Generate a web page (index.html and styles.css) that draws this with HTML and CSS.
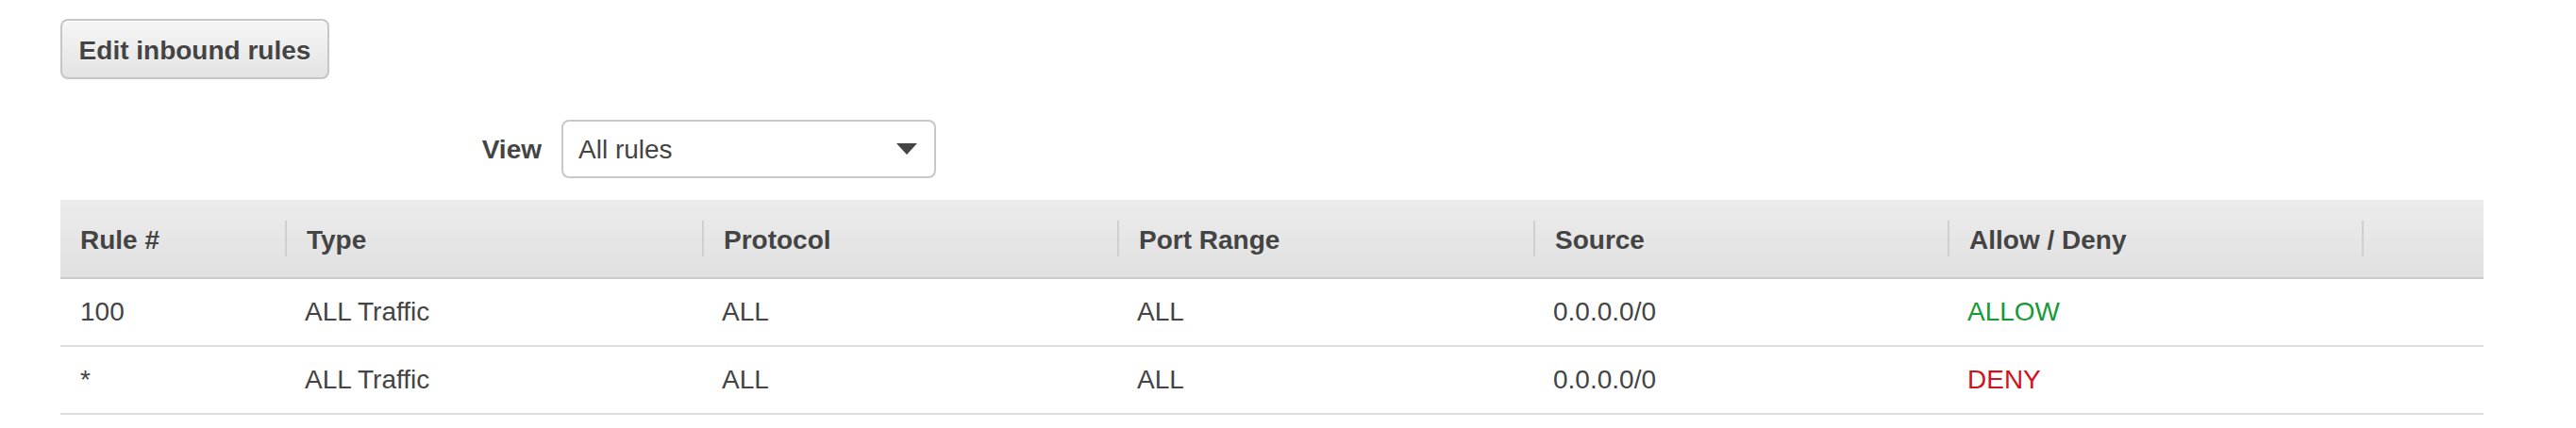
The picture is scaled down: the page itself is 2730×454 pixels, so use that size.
FILE: index.html
```html
<!DOCTYPE html>
<html>
<head>
<meta charset="utf-8">
<link rel="stylesheet" href="styles.css">
</head>
<body>
<div class="page">
  <div class="toolbar">
    <button class="btn">Edit inbound rules</button>
  </div>
  <div class="filter">
    <label class="filter-label">View</label>
    <div class="select">
      <span class="select-value">All rules</span>
      <svg class="select-arrow" width="22" height="12" viewBox="0 0 22 12"><polygon points="0,0 22,0 11,12" fill="#444"/></svg>
    </div>
  </div>
  <div class="grid">
    <div class="thead">
      <div class="th first"><span class="lab">Rule #</span></div>
      <div class="th"><span class="lab">Type</span></div>
      <div class="th"><span class="lab">Protocol</span></div>
      <div class="th"><span class="lab">Port Range</span></div>
      <div class="th"><span class="lab">Source</span></div>
      <div class="th"><span class="lab">Allow / Deny</span></div>
      <div class="th"><span class="lab"></span></div>
    </div>
    <div class="tr">
      <div class="td">100</div>
      <div class="td">ALL Traffic</div>
      <div class="td">ALL</div>
      <div class="td">ALL</div>
      <div class="td">0.0.0.0/0</div>
      <div class="td allow">ALLOW</div>
      <div class="td"></div>
    </div>
    <div class="tr">
      <div class="td">*</div>
      <div class="td">ALL Traffic</div>
      <div class="td">ALL</div>
      <div class="td">ALL</div>
      <div class="td">0.0.0.0/0</div>
      <div class="td deny">DENY</div>
      <div class="td"></div>
    </div>
  </div>
</div>
</body>
</html>
```
FILE: styles.css
```css
html, body {
  margin: 0;
  padding: 0;
  background: #fff;
}
body {
  font-family: "Liberation Sans", Arial, Helvetica, sans-serif;
  font-size: 28px;
  color: #444;
}
.page {
  padding: 20px 0 0 64px;
}
.toolbar {
  display: flex;
}
.btn {
  height: 64px;
  width: 285px;
  padding: 4px 0 0 0;
  font-family: inherit;
  font-size: 28px;
  font-weight: bold;
  color: #444;
  text-shadow: 0 1px 0 rgba(255,255,255,0.9);
  background: linear-gradient(#f6f6f6, #e3e3e3);
  border: 2px solid #c6c6c6;
  border-radius: 8px;
  box-shadow: inset 0 1px 0 #fff;
}
.filter {
  display: flex;
  align-items: center;
  margin-top: 43px;
  gap: 21px;
}
.filter-label {
  width: 510px;
  text-align: right;
  font-weight: bold;
  font-size: 28px;
  padding-top: 2px;
}
.select {
  box-sizing: border-box;
  width: 397px;
  height: 62px;
  border: 2px solid #c8c8c8;
  border-radius: 8px;
  background: #fff;
  display: flex;
  align-items: center;
  justify-content: space-between;
  padding: 0 18px 0 16px;
}
.select-value {
  font-size: 28px;
  padding-top: 2px;
}
.grid {
  margin-top: 23px;
  width: 2568px;
}
.thead, .tr {
  display: grid;
  grid-template-columns: 238px 442px 440px 441px 439px 439px 129px;
}
.thead {
  height: 82px;
  background: linear-gradient(#ececec, #e0e0e0);
  border-bottom: 2px solid #cbcbcb;
}
.th {
  display: flex;
  align-items: center;
  font-weight: bold;
}
.lab {
  box-sizing: border-box;
  height: 38px;
  line-height: 38px;
  border-left: 2px solid #cfcfcf;
  padding: 2px 0 0 21px;
  flex: 1;
  white-space: nowrap;
}
.th.first .lab {
  border-left: 0;
  padding-left: 21px;
}
.tr {
  height: 70px;
  border-bottom: 2px solid #dedede;
}
.td {
  display: flex;
  align-items: center;
  padding-left: 21px;
  white-space: nowrap;
}
.tr .td:first-child {
  padding-left: 21px;
}
.allow {
  color: #169a36;
}
.deny {
  color: #d0121b;
}
```
